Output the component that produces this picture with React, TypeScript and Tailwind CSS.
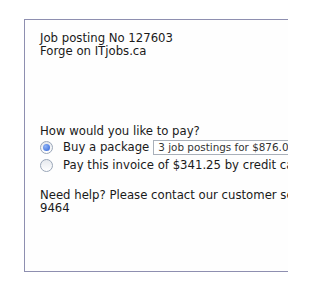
import React from "react";

function Radio({ checked }: { checked?: boolean }) {
  return (
    <span className="relative mr-[10px] inline-flex h-[13px] w-[13px] shrink-0 items-center justify-center rounded-full border border-[#9aa6b8] bg-[linear-gradient(#e6e9ee,#ffffff)]">
      {checked && (
        <span className="h-[7px] w-[7px] rounded-full bg-[radial-gradient(circle_at_35%_35%,#8fb3f5,#2f62d8)]" />
      )}
    </span>
  );
}

export default function App() {
  return (
    <div className="h-[288px] w-[288px] overflow-hidden bg-white pl-[24px] pt-[19px] font-['DejaVu_Sans',Verdana,sans-serif] text-[11.7px] leading-[13px] text-[#1a1a1a]">
      <div className="h-[253px] w-[520px] border border-[#8e8fb0] bg-[#fefefe] pl-[15px] pt-[12px]">
        <p>Job posting No 127603</p>
        <p>Forge on ITjobs.ca</p>

        <p className="mt-[67px]">How would you like to pay?</p>
        <div className="flex h-[18px] items-center whitespace-nowrap">
          <Radio checked />
          <span>Buy a package</span>
          <span className="ml-[4px] flex h-[15px] items-center border border-[#a9b0ba] bg-white pl-[4px] pr-[20px] text-[10.4px] text-[#333]">
            3 job postings for $876.00 (save 15%)
          </span>
        </div>
        <div className="flex h-[18px] items-center whitespace-nowrap">
          <Radio />
          <span>Pay this invoice of $341.25 by credit card</span>
        </div>

        <p className="mt-[15px] whitespace-nowrap">Need help? Please contact our customer service at 1-866-844-</p>
        <p>9464</p>
      </div>
    </div>
  );
}
